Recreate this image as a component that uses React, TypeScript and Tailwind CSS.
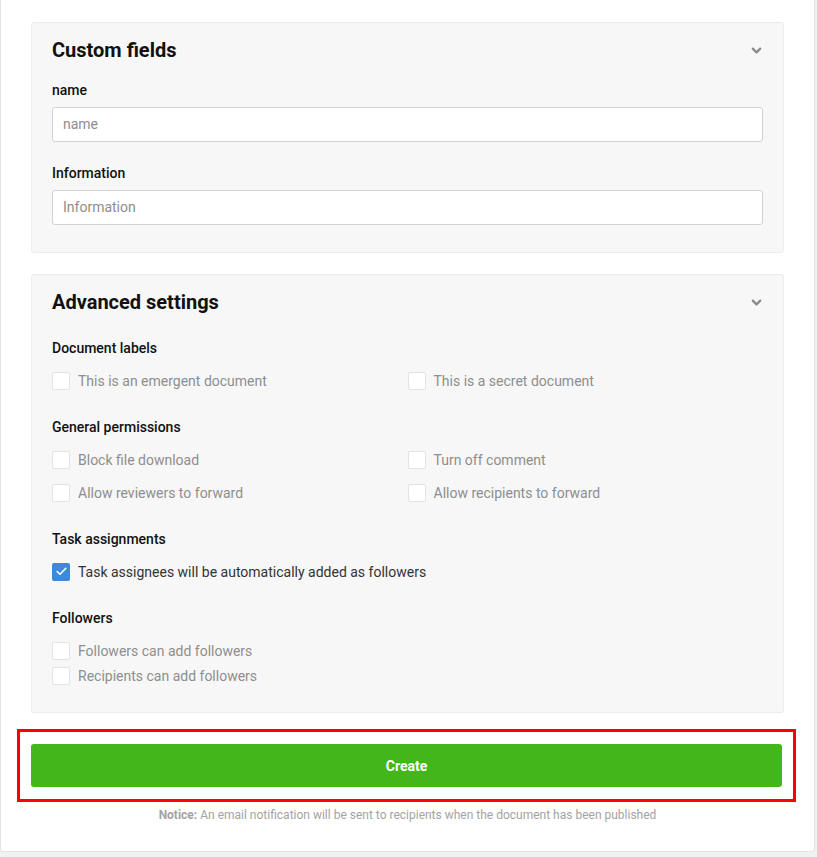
import { ChevronDown, Check } from 'lucide-react'

type Opt = { label: string; checked?: boolean }

function Box({ label, checked }: Opt) {
  return (
    <label className="flex h-[25px] items-center gap-2">
      {checked ? (
        <span className="flex h-[18px] w-[18px] items-center justify-center rounded-[2px] bg-[#3d87dc]">
          <Check size={13} strokeWidth={3} className="text-white" />
        </span>
      ) : (
        <span className="h-[18px] w-[18px] rounded-[2px] border border-[#e3e3e3] bg-white" />
      )}
      <span className={`text-sm ${checked ? 'text-[#333]' : 'text-[#8e8e8e]'}`}>{label}</span>
    </label>
  )
}

function Group({ title, children, last }: { title: string; children: React.ReactNode; last?: boolean }) {
  return (
    <div className={last ? '' : 'mb-6'}>
      <div className="mb-[10px] text-sm font-medium leading-5 text-[#111]">{title}</div>
      {children}
    </div>
  )
}

function SectionHead({ title }: { title: string }) {
  return (
    <div className="flex h-[28px] items-center justify-between">
      <h2 className="text-[20px] font-bold leading-[28px] text-[#111]">{title}</h2>
      <ChevronDown size={15} strokeWidth={3.5} className="-mr-[1px] text-[#8a8a8a]" />
    </div>
  )
}

export default function App() {
  return (
    <div className="min-h-screen bg-[#f1f1f1] font-['Roboto',sans-serif]">
      <div className="w-[815px] rounded-b-[3px] border-x border-b border-[#e4e4e4] bg-white px-[30px] pt-[22px] pb-[28px]">
        {/* Custom fields */}
        <section className="rounded-[3px] border border-[#ececec] bg-[#f7f7f7] px-5 pt-[13px] pb-[27px]">
          <SectionHead title="Custom fields" />
          <div className="mt-4 mb-[7px] text-sm font-medium leading-5 text-[#111]">name</div>
          <input
            placeholder="name"
            className="h-[35px] w-full rounded-[3px] border border-[#d2d2d2] bg-white px-[10px] pb-[2px] text-sm text-[#333] placeholder:text-[#8e8e8e] outline-none"
          />
          <div className="mt-[21px] mb-[7px] text-sm font-medium leading-5 text-[#111]">Information</div>
          <input
            placeholder="Information"
            className="h-[35px] w-full rounded-[3px] border border-[#d2d2d2] bg-white px-[10px] pb-[2px] text-sm text-[#333] placeholder:text-[#8e8e8e] outline-none"
          />
        </section>

        {/* Advanced settings */}
        <section className="mt-[21px] rounded-[3px] border border-[#ececec] bg-[#f7f7f7] px-5 pt-[13px] pb-6">
          <SectionHead title="Advanced settings" />
          <div className="mt-[22px]">
            <Group title="Document labels">
              <div className="grid grid-cols-2 gap-y-2">
                <Box label="This is an emergent document" />
                <Box label="This is a secret document" />
              </div>
            </Group>
            <Group title="General permissions">
              <div className="grid grid-cols-2 gap-y-2">
                <Box label="Block file download" />
                <Box label="Turn off comment" />
                <Box label="Allow reviewers to forward" />
                <Box label="Allow recipients to forward" />
              </div>
            </Group>
            <Group title="Task assignments">
              <Box label="Task assignees will be automatically added as followers" checked />
            </Group>
            <Group title="Followers" last>
              <Box label="Followers can add followers" />
              <Box label="Recipients can add followers" />
            </Group>
          </div>
        </section>

        <div className="mt-4 mr-[-12px] ml-[-14px] border-[3px] border-[#ff0000] px-[11px] py-3">
          <button className="h-[43px] w-full rounded-[3px] bg-[#43b619] text-sm font-bold text-white">Create</button>
        </div>

        <p className="mt-[5px] text-center text-xs leading-4 text-[#a3a3a3]">
          <span className="font-bold">Notice:</span> An email notification will be sent to recipients when the document has been published
        </p>
      </div>
    </div>
  )
}
